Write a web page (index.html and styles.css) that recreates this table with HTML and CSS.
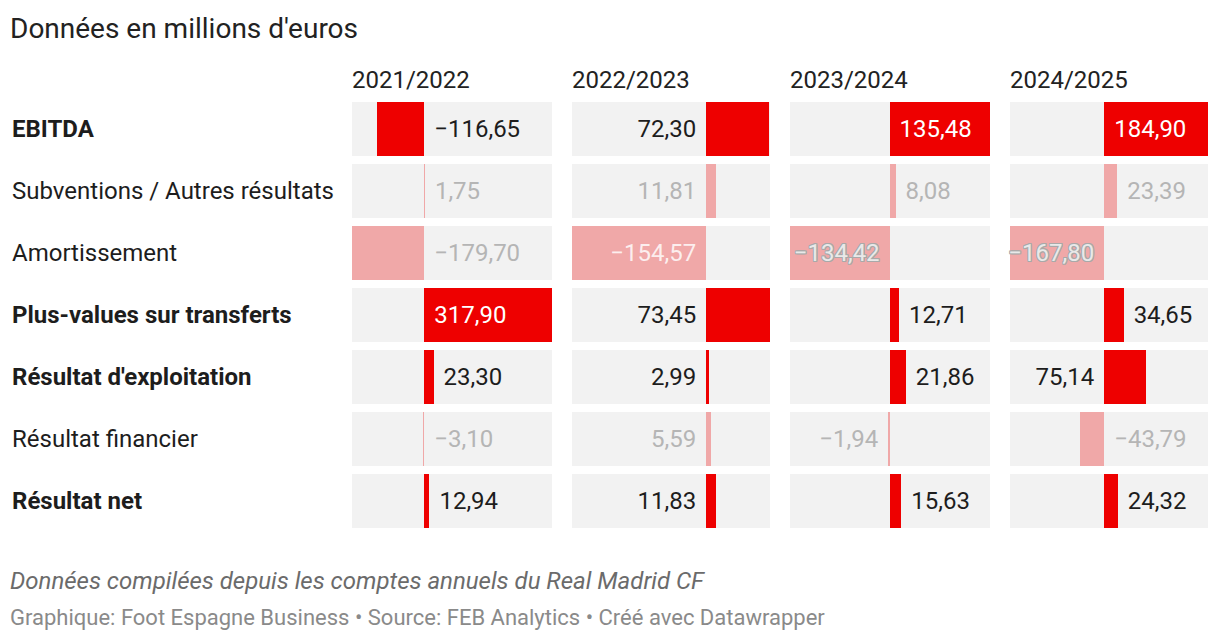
FILE: index.html
```html
<!DOCTYPE html>
<html lang="fr">
<head>
<meta charset="utf-8">
<title>Données en millions d'euros</title>
<link rel="stylesheet" href="styles.css">
</head>
<body>
<div class="chart">
  <h1 class="title">Données en millions d'euros</h1>
  <div class="table">
    <div class="corner"></div>
    <div class="colhead">2021/2022</div>
    <div class="colhead">2022/2023</div>
    <div class="colhead">2023/2024</div>
    <div class="colhead">2024/2025</div>

    <div class="rowlabel strong">EBITDA</div>
    <div class="cell strong"><div class="neg" style="width:72.23px"><div class="bar" style="width:46.89px"></div></div><div class="pos"><span class="val r">−116,65</span></div></div>
    <div class="cell strong"><div class="neg" style="width:134.22px"><span class="val l">72,30</span></div><div class="pos"><div class="bar" style="width:62.78px"></div></div></div>
    <div class="cell strong"><div class="neg" style="width:99.61px"></div><div class="pos"><div class="bar in" style="width:100.39px"><span class="val white">135,48</span></div></div></div>
    <div class="cell strong"><div class="neg" style="width:94.20px"></div><div class="pos"><div class="bar in" style="width:103.80px"><span class="val white">184,90</span></div></div></div>

    <div class="rowlabel">Subventions / Autres résultats</div>
    <div class="cell soft"><div class="neg" style="width:72.23px"></div><div class="pos"><div class="bar" style="width:0.70px"></div><span class="val r">1,75</span></div></div>
    <div class="cell soft"><div class="neg" style="width:134.22px"><span class="val l">11,81</span></div><div class="pos"><div class="bar" style="width:10.26px"></div></div></div>
    <div class="cell soft"><div class="neg" style="width:99.61px"></div><div class="pos"><div class="bar" style="width:5.99px"></div><span class="val r">8,08</span></div></div>
    <div class="cell soft"><div class="neg" style="width:94.20px"></div><div class="pos"><div class="bar" style="width:13.13px"></div><span class="val r">23,39</span></div></div>

    <div class="rowlabel">Amortissement</div>
    <div class="cell soft"><div class="neg" style="width:72.23px"><div class="bar" style="width:72.23px"></div></div><div class="pos"><span class="val r">−179,70</span></div></div>
    <div class="cell soft"><div class="neg" style="width:134.22px"><div class="bar in-neg" style="width:134.22px"><span class="val white-soft">−154,57</span></div></div><div class="pos"></div></div>
    <div class="cell soft"><div class="neg" style="width:99.61px"><div class="bar in-neg" style="width:99.61px"><span class="val halo">−134,42</span></div></div><div class="pos"></div></div>
    <div class="cell soft"><div class="neg" style="width:94.20px"><div class="bar in-neg" style="width:94.20px"><span class="val halo">−167,80</span></div></div><div class="pos"></div></div>

    <div class="rowlabel strong">Plus-values sur transferts</div>
    <div class="cell strong"><div class="neg" style="width:72.23px"></div><div class="pos"><div class="bar in" style="width:127.77px"><span class="val white">317,90</span></div></div></div>
    <div class="cell strong"><div class="neg" style="width:134.22px"><span class="val l">73,45</span></div><div class="pos"><div class="bar" style="width:63.78px"></div></div></div>
    <div class="cell strong"><div class="neg" style="width:99.61px"></div><div class="pos"><div class="bar" style="width:9.42px"></div><span class="val r">12,71</span></div></div>
    <div class="cell strong"><div class="neg" style="width:94.20px"></div><div class="pos"><div class="bar" style="width:19.45px"></div><span class="val r">34,65</span></div></div>

    <div class="rowlabel strong">Résultat d'exploitation</div>
    <div class="cell strong"><div class="neg" style="width:72.23px"></div><div class="pos"><div class="bar" style="width:9.37px"></div><span class="val r">23,30</span></div></div>
    <div class="cell strong"><div class="neg" style="width:134.22px"><span class="val l">2,99</span></div><div class="pos"><div class="bar" style="width:2.60px"></div></div></div>
    <div class="cell strong"><div class="neg" style="width:99.61px"></div><div class="pos"><div class="bar" style="width:16.20px"></div><span class="val r">21,86</span></div></div>
    <div class="cell strong"><div class="neg" style="width:94.20px"><span class="val l">75,14</span></div><div class="pos"><div class="bar" style="width:42.18px"></div></div></div>

    <div class="rowlabel">Résultat financier</div>
    <div class="cell soft"><div class="neg" style="width:72.23px"><div class="bar" style="width:1.25px"></div></div><div class="pos"><span class="val r">−3,10</span></div></div>
    <div class="cell soft"><div class="neg" style="width:134.22px"><span class="val l">5,59</span></div><div class="pos"><div class="bar" style="width:4.85px"></div></div></div>
    <div class="cell soft"><div class="neg" style="width:99.61px"><span class="val l">−1,94</span><div class="bar" style="width:1.44px"></div></div><div class="pos"></div></div>
    <div class="cell soft"><div class="neg" style="width:94.20px"><div class="bar" style="width:24.58px"></div></div><div class="pos"><span class="val r">−43,79</span></div></div>

    <div class="rowlabel strong">Résultat net</div>
    <div class="cell strong"><div class="neg" style="width:72.23px"></div><div class="pos"><div class="bar" style="width:5.20px"></div><span class="val r">12,94</span></div></div>
    <div class="cell strong"><div class="neg" style="width:134.22px"><span class="val l">11,83</span></div><div class="pos"><div class="bar" style="width:10.27px"></div></div></div>
    <div class="cell strong"><div class="neg" style="width:99.61px"></div><div class="pos"><div class="bar" style="width:11.58px"></div><span class="val r">15,63</span></div></div>
    <div class="cell strong"><div class="neg" style="width:94.20px"></div><div class="pos"><div class="bar" style="width:13.65px"></div><span class="val r">24,32</span></div></div>
  </div>
  <p class="notes">Données compilées depuis les comptes annuels du Real Madrid CF</p>
  <p class="byline">Graphique: Foot Espagne Business • Source: FEB Analytics • Créé avec Datawrapper</p>
</div>
</body>
</html>
```
FILE: styles.css
```css
* { box-sizing: border-box; }

html, body {
  margin: 0;
  padding: 0;
  background: #ffffff;
}

body {
  font-family: Roboto, "Liberation Sans", Arial, sans-serif;
  color: #1d1d1d;
}

.chart {
  padding: 12px 12px 0 10px;
}

.title {
  margin: 0 0 20px 0;
  font-size: 28px;
  line-height: 34px;
  font-weight: 400;
  color: #222222;
}

.table {
  display: grid;
  grid-template-columns: 322px 200px 198px 200px 198px;
  grid-auto-rows: 54px;
  grid-template-rows: 28px;
  column-gap: 20px;
  row-gap: 8px;
}

.colhead {
  font-size: 24px;
  line-height: 28px;
  color: #222222;
  white-space: nowrap;
}

.rowlabel {
  display: flex;
  align-items: center;
  font-size: 24px;
  color: #1d1d1d;
  white-space: nowrap;
  padding-left: 2px;
}

.rowlabel.strong {
  font-weight: 700;
}

.cell {
  display: flex;
  background: #f2f2f2;
  font-size: 24px;
  white-space: nowrap;
}

.neg {
  flex: none;
  display: flex;
  justify-content: flex-end;
  align-items: center;
}

.pos {
  flex: 1;
  min-width: 0;
  display: flex;
  align-items: center;
}

.bar {
  flex: none;
  align-self: stretch;
  display: flex;
  align-items: center;
}

.bar.in {
  padding-left: 10px;
}

.bar.in-neg {
  justify-content: flex-end;
  padding-right: 10px;
}

.cell.strong .bar { background: #ee0000; }
.cell.soft .bar { background: #f0a8a8; }

.val { line-height: 1; }
.cell.strong .val { color: #1d1d1d; }
.cell.soft .val { color: #b5b5b5; }

.val.l { margin-right: 10px; }
.val.r { margin-left: 10px; }

.cell .val.white { color: #ffffff; }
.cell .val.white-soft { color: rgba(255, 255, 255, 0.82); }
.cell .val.halo {
  color: #e9e9e9;
  text-shadow:
    1px 0 0 #a9a9a9, -1px 0 0 #a9a9a9, 0 1px 0 #a9a9a9, 0 -1px 0 #a9a9a9,
    1px 1px 0 #a9a9a9, -1px -1px 0 #a9a9a9, 1px -1px 0 #a9a9a9, -1px 1px 0 #a9a9a9;
}

.notes {
  margin: 39px 0 0 0;
  font-size: 24px;
  line-height: 28px;
  font-style: italic;
  color: #6b6b6b;
}

.byline {
  margin: 10px 0 0 0;
  font-size: 22px;
  line-height: 26px;
  color: #8a8a8a;
}
```
